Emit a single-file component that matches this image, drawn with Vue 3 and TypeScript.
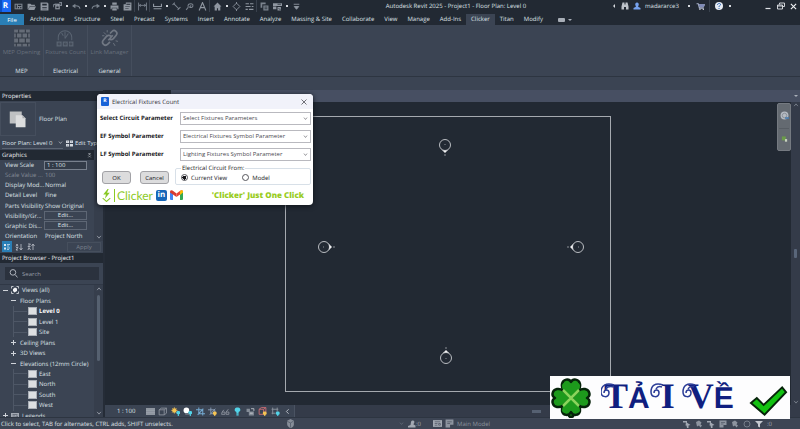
<script setup lang="ts">
import { h, ref } from 'vue'

type Part = { d: string; f?: string; s?: string; w?: number }
type Row = { label: string; value: string; kind: 'text' | 'input' | 'button'; muted?: boolean }
type Node = { label: string; depth: 0 | 1 | 2; mark: '+' | '-' | ''; current?: boolean }

const G = '#8f96a0'
const Y = '#f5c453'
const C = '#52d3e8'

const icons: Record<string, Part[]> = {
  recent: [{ d: 'M1 3h14v10H1z', f: '#7b838e' }, { d: 'M3 5h2v6H3zM7 5h6v2H7zM7 9h2v2H7zM11 9h2v2h-2z', f: '#222933' }],
  open: [{ d: 'M1 3h5l2 2h6v2H5l-3 6H1zM5 8h11l-3 6H2z', f: G }],
  save: [{ d: 'M1 1h12l2 2v12H1z', f: G }, { d: 'M4 3h8v3H4zM4 9h8v1H4zM4 12h8v1H4z', f: '#222933' }],
  sync: [{ d: 'M4 3h8v10H4z', f: G }, { d: 'M8 8a4 3 0 1 0-7 1M11 1h4v5h-4', s: '#7b838e', w: 2 }, { d: 'M6 8h4v3H6z', f: '#222933' }],
  undo: [{ d: 'M14 12c0-4-4-6-10-5', s: '#7b838e', w: 2 }, { d: 'M0 7l6-4v8z', f: '#7b838e' }],
  redo: [{ d: 'M2 12c0-4 4-6 10-5', s: '#7b838e', w: 2 }, { d: 'M16 7l-6-4v8z', f: '#7b838e' }],
  print: [{ d: 'M4 1h8v4H4zM1 6h14v7h-2v-3H3v3H1zM4 11h8v4H4z', f: G }],
  pdf: [{ d: 'M1 4h4V1h10v14H1z', f: G }, { d: 'M6 3h7v2H6zM4 8h8v1H4zM4 11h6v1H4z', f: '#222933' }],
  measure: [{ d: 'M1 1v14M15 1v14M2 6h12M5 4L2 6l3 2M11 4l3 2-3 2', s: '#7b838e', w: 1.6 }],
  dim: [{ d: 'M1 3v5h14V3M1 12h14', s: G, w: 2 }],
  line: [{ d: 'M3 3l9 9M1 5l4-4M10 14l5-5', s: '#7b838e', w: 1.8 }],
  tag: [{ d: 'M2 14l4-5M6 9c-3-5 5-8 8-4 1 4-3 6-6 4l3-3', s: '#7b838e', w: 1.8 }],
  letter: [{ d: 'M2 15L8 1l6 14M4 10h8', s: G, w: 2 }],
  home: [{ d: 'M8 1l7 7h-2v7H9v-4H7v4H3V8H1z', f: G }],
  section: [{ d: 'M8 2l6 6-6 6-6-6zM8 0v3M8 13v3', s: G, w: 1.6 }],
  lines: [{ d: 'M1 3h6M9 3h6M1 8h9M12 8h3M1 13h4M7 13h8', s: G, w: 2 }],
  windows: [{ d: 'M1 1h9v3H4v6H1zM6 6h9v9H6z', f: '#7b838e' }, { d: 'M8 9h5M8 12h5', s: '#222933', w: 1.4 }],
  tiles: [{ d: 'M0 2h16v5H0zM0 8h6v5H0zM8 9h6v6H8z', f: G }, { d: 'M8 4h6M10 11l3 3', s: '#222933', w: 1.4 }],
  more: [{ d: 'M3 4h10M4 8h8l-4 5z', s: G, w: 1.6, f: G }],
  bino: [{ d: 'M3 1h4v4h2V1h4l2 8v6h-5v-5H6v5H1V9z', f: '#bdc2ca' }],
  user: [{ d: 'M8 1a4 4 0 0 1 3 6c-1 2-1 3 0 3l4 2v3H1v-3l4-2c1 0 1-1 0-3a4 4 0 0 1 3-6z', f: '#76a2ee' }],
  cart: [{ d: 'M1 3h3l2 8h8M4 5h11l-2 4H6', s: '#aab3ca', w: 1.8 }, { d: 'M5 4h10l-1 5H6z', f: '#7f8bb8' }, { d: 'M6 12h2v2H6zM12 12h2v2h-2z', f: '#d6dae2' }],
  help: [{ d: 'M8 0a8 8 0 1 1 0 16A8 8 0 0 1 8 0z', f: '#e7ecf4' }, { d: 'M5 6c0-4 6-4 6-1 0 2-3 2-3 5M8 12v2', s: '#2d66b8', w: 2 }],
  min: [{ d: 'M3 13h10', s: '#e0e3e8', w: 2.4 }],
  restore: [{ d: 'M5 5V2h10v7h-4M1 6h10v8H1zM1 8h10', s: '#e0e3e8', w: 1.8 }],
  close: [{ d: 'M2 2l12 12M14 2L2 14', s: '#f0f2f5', w: 2.6 }],
  brick: [{ d: 'M2 1h28v30H2z', f: '#656c77' }, { d: 'M2 7h28M2 16h28M2 25h28M10 1v6M22 1v6M6 7v9M16 7v9M26 7v9M10 16v9M22 16v9M6 25v6M16 25v6M26 25v6', s: '#333b47', w: 2 }],
  count: [{ d: 'M4 20V15a12 12 0 0 1 24 0v5M16 5v12M10 7l3 5M22 8l-6 9', s: '#596371', w: 1.8 }, { d: 'M1 22h9v9H1zM12 22h9v9h-9zM23 22h8v9h-8z', f: '#596371' }, { d: 'M4 25h3v3H4zM15 25h3v3h-3zM25 25h3v3h-3z', s: '#333b47', w: 1 }],
  link: [{ d: 'M13 20l8-9M16 8l4-4c4-4 11 2 7 7l-5 6c-3 3-6 2-8 0M18 13c-3-3-7-2-9 1l-5 6c-4 5 3 12 8 7l4-4', s: '#717883', w: 3 }, { d: 'M5 6l4 4M11 2v4M2 12h4M26 21l4 1M22 25l3 5', s: '#717883', w: 1.6 }],
  search: [{ d: 'M7 1a5 5 0 1 1 0 10A5 5 0 0 1 7 1zM11 10l4 5', s: '#bbc0c8', w: 1.6 }],
  edittype: [{ d: 'M0 1h7v6H0zM9 1h7v6H9zM0 9h7v6H0zM9 9h7v6H9z', f: '#d8dce2' }, { d: 'M2 4h3M11 4h3M2 12h3', s: '#6f7c90', w: 1.4 }],
  views: [{ d: 'M1 5V1h4M11 1h4v4M15 11v4h-4M5 15H1v-4', s: '#dfe2e6', w: 1.6 }, { d: 'M8 3l4 2v5l-5 3-3-3V6z', f: '#f2f3f5' }],
  grouped: [{ d: 'M2 2h4v4H2zM2 9h4v4H2z', f: '#dce8f0' }, { d: 'M8 3h6M8 6h4M8 10h6M8 13h4', s: '#dce8f0', w: 1.4 }],
  az: [{ d: 'M2 7l2-5 2 5M2 9h4l-4 5h4M12 2v11M9 10l3 4 3-4', s: '#c5cad2', w: 1.5 }],
  za: [{ d: 'M2 2h5L2 7h5M2 14l2-5 3 5M12 14V3M9 6l3-4 3 4', s: '#c5cad2', w: 1.5 }],
  detail: [{ d: 'M0 2h16v12H0z', f: '#9da4ad' }, { d: 'M0 5h16M0 8h16M0 11h16', s: '#7b838e', w: 1 }],
  cube: [{ d: 'M2 5h9v9H2zM2 5l4-3h9l-4 3M15 2v9l-4 3', s: G, w: 1.5 }],
  sun: [{ d: 'M6 2a4 4 0 1 1 0 8 4 4 0 0 1 0-8z', f: Y }, { d: 'M6 0v12M0 6h12M2 2l8 8M10 2l-8 8', s: Y, w: 1 }, { d: 'M13 7a3 3 0 0 1 1 6v3h-2v-3a3 3 0 0 1 1-6z', f: C }],
  shadow: [{ d: 'M6 1a5 5 0 1 1 0 10A5 5 0 0 1 6 1z', f: '#fff' }, { d: 'M4 11h8v3H4z', f: '#6e7682' }, { d: 'M13 7a3 3 0 0 1 1 6v3h-2v-3a3 3 0 0 1 1-6z', f: C }],
  crop: [{ d: 'M5 1v11h11M0 5h12v10M3 14L13 3', s: '#74aad2', w: 1.8 }],
  cropshow: [{ d: 'M5 1v11h9M0 5h12v5M3 14L13 3', s: '#8da1b9', w: 1.6 }, { d: 'M12 8a3 3 0 0 1 1 6v2h-2v-2a3 3 0 0 1 1-6z', f: Y }],
  glasses: [{ d: 'M2 9h5v4H1zM9 9h5v4H9zM2 9l3-4M9 9l4-5', s: '#878e99', w: 1.7 }],
  bulb: [{ d: 'M8 1a4 4 0 0 1 2 8v3H6V9a4 4 0 0 1 2-8zM6 13h4v2H6z', f: C }],
  analytic: [{ d: 'M1 3h6v6H1zM5 8h9v7H5z', f: '#858d98' }, { d: 'M9 3h5v4M7 11h5', s: '#c6cad0', w: 1.5 }],
  reveal: [{ d: 'M2 4h8v9H2zM2 4l4-3h8l-4 3M14 1v8', s: '#c46b72', w: 1.7 }, { d: 'M12 8a3 3 0 0 1 1 6v2h-2v-2a3 3 0 0 1 1-6z', f: Y }],
  constraint: [{ d: 'M1 4h12M3 1v12M11 1v7M1 11h7', s: '#8d959f', w: 1.6 }, { d: 'M12 8a3 3 0 0 1 1 6v2h-2v-2a3 3 0 0 1 1-6z', f: C }],
  left: [{ d: 'M10 4L6 8l4 4', s: '#c0c5cd', w: 1.6 }],
  down: [{ d: 'M3 5l5 6 5-6', s: 'currentColor', w: 1.8 }],
  up: [{ d: 'M3 11l5-6 5 6', s: 'currentColor', w: 1.8 }],
  pin: [{ d: 'M4 2h8M4 8l4-4 4 4M4 14l4-4 4 4', s: '#d6d9de', w: 1.8 }],
  workset: [{ d: 'M8 0l6 3v7c-1 4-3 5-6 6-3-1-6-3-6-7V3z', f: '#878e99' }, { d: 'M2 4l6 3 5-3M8 7v8', s: '#565f6d', w: 1.5 }],
  person: [{ d: 'M9 1a3 3 0 0 1 3 5l-1 3 4 2v4H0v-3l5-2 1-6a3 3 0 0 1 3-3z', f: '#a2a8b2' }],
  list: [{ d: 'M0 2h16v12H0z', f: '#a2a8b2' }, { d: 'M3 5h10M3 8h5M3 11h5M10 8h3v3h-3z', s: '#4d5563', w: 1.3 }],
  option: [{ d: 'M1 1h14v9H9v5H1z', f: '#8d949f' }, { d: 'M4 5h8M4 8h5', s: '#4d5563', w: 1.3 }],
  pick: [{ d: 'M0 2h8v3H0zM6 4l9 6-4 1v5H8l-1-5H5z', f: '#a2a8b2' }],
  pick2: [{ d: 'M2 4l6-3 5 4-2 4 3 2-3 4-3-4-4 2z', f: '#8d949f' }],
  ring: [{ d: 'M8 2a6 6 0 1 1 0 12A6 6 0 0 1 8 2z', s: '#7e8692', w: 1.7 }],
  filter: [{ d: 'M0 2h16l-6 6v7l-4-2V8z', f: '#c5c9d0' }],
  x: [{ d: 'M3 3l10 10M13 3L3 13', s: '#3a3a40', w: 1.4 }],
  pages: [{ d: 'M1 2h16v16H1z', f: '#bfc1c3' }, { d: 'M9 7h9l4 4v12H9z', f: '#dcddde' }, { d: 'M18 7l4 4h-4z', f: '#a3a6aa' }],
  wheel: [{ d: 'M8 1a7 7 0 1 1 0 14A7 7 0 0 1 8 1z', f: '#b6bbc2' }, { d: 'M8 4a4 4 0 1 1 0 8 4 4 0 0 1 0-8z', s: '#7b828b', w: 1.3 }, { d: 'M9 11h7v3H9z', f: '#4c7dad' }],
  zoom: [{ d: 'M2 1h9v9H2z', f: '#6b9b4a' }, { d: 'M9 7h5v6H9z', f: '#c9d3c0' }],
}

const Glyph = (p: { name: string; size?: number; box?: string }) =>
  h('svg', { width: p.size ?? 9, height: p.size ?? 9, viewBox: p.box ?? '0 0 16 16', 'aria-hidden': 'true', class: 'glyph' },
    icons[p.name].map(a => h('path', { d: a.d, fill: a.f ?? 'none', stroke: a.s ?? 'none', 'stroke-width': a.w ?? 0 })))
Glyph.props = ['name', 'size', 'box']

const quick = ['recent', 'open', 'save', 'sync', '.', 'undo', '.', 'redo', '.', 'print', 'pdf', '|', 'measure', '|', 'dim', '.',
  'line', 'tag', 'letter', '|', 'home', '.', 'section', 'lines', '|', 'windows', 'tiles', '.', 'more']
const tabs = ['Architecture', 'Structure', 'Steel', 'Precast', 'Systems', 'Insert', 'Annotate', 'Analyze', 'Massing & Site',
  'Collaborate', 'View', 'Manage', 'Add-Ins', 'Clicker', 'Titan', 'Modify']
const panels = [
  { icon: 'brick', tool: 'MEP Opening', name: 'MEP' },
  { icon: 'count', tool: 'Fixtures Count', name: 'Electrical' },
  { icon: 'link', tool: 'Link Manager', name: 'General' },
]
const rows: Row[] = [
  { label: 'View Scale', value: '1 : 100', kind: 'input' },
  { label: 'Scale Value  ...', value: '100', kind: 'text', muted: true },
  { label: 'Display Mod...', value: 'Normal', kind: 'text' },
  { label: 'Detail Level', value: 'Fine', kind: 'text' },
  { label: 'Parts Visibility', value: 'Show Original', kind: 'text' },
  { label: 'Visibility/Gr...', value: 'Edit...', kind: 'button' },
  { label: 'Graphic Dis...', value: 'Edit...', kind: 'button' },
  { label: 'Orientation', value: 'Project North', kind: 'text' },
]
const tree: Node[] = [
  { label: 'Views (all)', depth: 0, mark: '-' },
  { label: 'Floor Plans', depth: 1, mark: '-' },
  { label: 'Level 0', depth: 2, mark: '', current: true },
  { label: 'Level 1', depth: 2, mark: '' },
  { label: 'Site', depth: 2, mark: '' },
  { label: 'Ceiling Plans', depth: 1, mark: '+' },
  { label: '3D Views', depth: 1, mark: '+' },
  { label: 'Elevations (12mm Circle)', depth: 1, mark: '-' },
  { label: 'East', depth: 2, mark: '' },
  { label: 'North', depth: 2, mark: '' },
  { label: 'South', depth: 2, mark: '' },
  { label: 'West', depth: 2, mark: '' },
  { label: 'Legends', depth: 0, mark: '+' },
]
const viewTools = ['detail', 'cube', 'sun', 'shadow', 'crop', 'cropshow', 'glasses', 'bulb', 'analytic', 'reveal', 'constraint', 'left']
const pickTools = ['pick', 'pick2', 'pick', 'option', 'pick2', 'ring', 'filter']
const fields = [
  { id: 'circuit', label: 'Select Circuit Parameter', value: 'Select Fixtures Parameters' },
  { id: 'ef', label: 'EF Symbol Parameter', value: 'Electrical Fixtures Symbol Parameter' },
  { id: 'lf', label: 'LF Symbol Parameter', value: 'Lighting Fixtures Symbol Parameter' },
]
const markers = [
  { x: 445, y: 145, turn: 90 },
  { x: 324, y: 247, turn: 0 },
  { x: 578, y: 247, turn: 180 },
  { x: 446, y: 358, turn: 270 },
]
const source = ref('view')
const query = ref('')
const scale = ref('1 : 100')
</script>

<template>
  <div class="app">
    <header class="titlebar">
      <span class="logo">R</span>
      <div class="quick">
        <template v-for="(q, i) in quick" :key="i">
          <i v-if="q === '.'" class="dot"></i>
          <i v-else-if="q === '|'" class="sep"></i>
          <button v-else type="button" class="tool" :aria-label="q"><Glyph :name="q" /></button>
        </template>
      </div>
      <h1 class="title">Autodesk Revit 2025 - Project1 - Floor Plan: Level 0</h1>
      <div class="account">
        <i class="arrow"></i>
        <Glyph name="bino" :size="8" />
        <Glyph name="user" :size="8" />
        <span class="name">madararce3</span>
        <i class="dot"></i>
        <Glyph name="cart" />
        <i class="sep"></i>
        <Glyph name="help" :size="8" />
        <i class="dot"></i>
      </div>
      <div class="winbtns">
        <button type="button" class="tool" aria-label="Minimize"><Glyph name="min" :size="8" /></button>
        <button type="button" class="tool" aria-label="Restore"><Glyph name="restore" :size="8" /></button>
        <button type="button" class="tool" aria-label="Close"><Glyph name="close" :size="7" /></button>
      </div>
    </header>

    <nav class="tabs">
      <button type="button" class="file">File</button>
      <a v-for="t in tabs" :key="t" href="#" :class="['tab', { on: t === 'Clicker' }]">{{ t }}</a>
      <button type="button" class="tabmode" aria-label="Ribbon display"><i class="pill"></i><i class="caret"></i></button>
    </nav>

    <section class="ribbon">
      <div v-for="p in panels" :key="p.name" class="rpanel">
        <button type="button" class="rtool" disabled>
          <Glyph :name="p.icon" :size="18" box="0 0 32 32" />
          <span>{{ p.tool }}</span>
        </button>
        <span class="rname">{{ p.name }}</span>
      </div>
    </section>
    <div class="options"></div>

    <main class="work">
      <aside class="side">
        <section class="props">
          <h2 class="bar">Properties</h2>
          <div class="type">
            <span class="thumb"><Glyph name="pages" :size="18" box="0 0 24 24" /></span>
            <span>Floor Plan</span>
          </div>
          <div class="picker">
            <button type="button" class="pickview">Floor Plan: Level 0 <Glyph name="down" :size="5" /></button>
            <button type="button" class="edittype"><Glyph name="edittype" :size="7" /> Edit Type</button>
          </div>
          <h3 class="bar group">Graphics <Glyph name="pin" :size="5" /></h3>
          <div class="gridwrap">
            <dl class="grid">
              <div v-for="r in rows" :key="r.label" :class="['row', { muted: r.muted }]">
                <dt>{{ r.label }}</dt>
                <dd>
                  <input v-if="r.kind === 'input'" v-model="scale" :aria-label="r.label" />
                  <button v-else-if="r.kind === 'button'" type="button">{{ r.value }}</button>
                  <template v-else>{{ r.value }}</template>
                </dd>
              </div>
            </dl>
            <div class="scroll"><i class="thumbbar short"></i><Glyph name="down" :size="6" /></div>
          </div>
          <div class="sorts">
            <button type="button" class="on" aria-label="Grouped"><Glyph name="grouped" :size="8" /></button>
            <button type="button" aria-label="Ascending"><Glyph name="az" :size="8" /></button>
            <button type="button" aria-label="Descending"><Glyph name="za" :size="8" /></button>
            <button type="button" class="apply" disabled>Apply</button>
          </div>
        </section>
        <section class="browser">
          <h2 class="bar">Project Browser - Project1</h2>
          <label class="find"><Glyph name="search" :size="9" /><input v-model="query" type="text" placeholder="Search" aria-label="Search" /></label>
          <div class="treewrap">
            <ul class="tree">
              <li v-for="n in tree" :key="n.label" :class="['node', 'd' + n.depth, { current: n.current }]">
                <i v-if="n.mark" :class="['mark', { plus: n.mark === '+' }]"></i>
                <i v-if="n.depth === 2" class="sheet"></i>
                <Glyph v-if="n.label === 'Views (all)'" name="views" :size="8" />
                <Glyph v-if="n.label === 'Legends'" name="list" :size="8" />
                <span>{{ n.label }}</span>
              </li>
            </ul>
            <div class="scroll"><Glyph name="up" :size="6" /><i class="thumbbar"></i><Glyph name="down" :size="6" /></div>
          </div>
        </section>
      </aside>

      <section class="view">
        <div class="doctabs"><span class="doctab"></span><i class="caret"></i></div>
        <div class="canvas">
          <svg class="drawing" viewBox="105 102 686 303" preserveAspectRatio="xMidYMid meet" role="img" aria-label="Floor plan drawing">
            <rect x="285.500" y="116.500" width="325" height="275" fill="none" stroke="#a5a9af" />
            <g v-for="(m, i) in markers" :key="i" :transform="`translate(${m.x} ${m.y}) rotate(${m.turn})`">
              <circle r="5.500" fill="none" stroke="#b9bcc1" />
              <path d="M4-4L8 0 4 4C6 2 6-2 4-4z" fill="#f1f2f3" />
              <path d="M-1 0h1M9 0h2" stroke="#8b9097" />
            </g>
          </svg>
          <div class="navbar">
            <button type="button" aria-label="Steering wheel"><Glyph name="wheel" /></button>
            <i></i>
            <button type="button" aria-label="Zoom"><Glyph name="zoom" :size="7" /></button>
          </div>
          <div class="vscroll"><Glyph name="up" :size="6" /><i></i><Glyph name="down" :size="6" /></div>
        </div>
        <div class="viewbar">
          <span class="scale">1 : 100</span>
          <button v-for="v in viewTools" :key="v" type="button" :aria-label="v"><Glyph :name="v" :size="9" /></button>
          <div class="hscroll"><i></i></div>
        </div>
      </section>
    </main>

    <footer class="status">
      <span class="hint">Click to select, TAB for alternates, CTRL adds, SHIFT unselects.</span>
      <div class="workset"><Glyph name="workset" /><Glyph name="down" :size="5" /></div>
      <span class="requests"><Glyph name="person" :size="8" />:0</span>
      <span class="model"><Glyph name="list" /><Glyph name="option" /> Main Model</span>
      <div class="picks"><Glyph v-for="(p, i) in pickTools" :key="i" :name="p" :size="8" /><span>:0</span></div>
    </footer>

    <form class="dialog" role="dialog" aria-labelledby="dlg-title" @submit.prevent>
      <header class="dhead">
        <span class="dlogo">R</span>
        <h2 id="dlg-title">Electrical Fixtures Count</h2>
        <button type="button" aria-label="Close dialog"><Glyph name="x" :size="8" /></button>
      </header>
      <div class="dbody">
        <div v-for="f in fields" :key="f.id" class="field">
          <label :for="f.id">{{ f.label }}</label>
          <span class="combo">
            <select :id="f.id"><option>{{ f.value }}</option></select>
            <Glyph name="down" :size="5" />
          </span>
        </div>
        <div class="actions">
          <button type="submit">OK</button>
          <button type="button">Cancel</button>
          <fieldset>
            <legend>Electrical Circuit From:</legend>
            <label><input v-model="source" type="radio" name="source" value="view" />Current View</label>
            <label><input v-model="source" type="radio" name="source" value="model" />Model</label>
          </fieldset>
        </div>
        <div class="brand">
          <svg class="glyph" width="9" height="13" viewBox="0 0 16 24" aria-hidden="true">
            <path d="M10 0L2 10h5l-2 8 9-11H9l3-7z" fill="#8bc926" /><path d="M1 17l7 6 7-6" fill="none" stroke="#8bc926" stroke-width="2" />
          </svg>
          <span class="word">Clicker</span>
          <a href="#" class="linkedin" aria-label="LinkedIn">in</a>
          <a href="#" aria-label="Mail">
            <svg class="glyph" width="13" height="10" viewBox="0 0 26 20" aria-hidden="true">
              <path d="M0 3v15q0 2 2 2h4V7z" fill="#4284f3" /><path d="M26 3v15q0 2-2 2h-4V7z" fill="#34a853" />
              <path d="M0 3Q1-1 5 1l8 6v7L0 5z" fill="#d63a32" /><path d="M26 3q-1-4-5-2l-8 6v7l7-5z" fill="#e94235" /><path d="M20 3l3-3q3 0 3 3v2l-6 5z" fill="#fbbc04" />
            </svg>
          </a>
          <strong>'Clicker' Just One Click</strong>
        </div>
      </div>
    </form>

    <a class="banner" href="#">
      <svg class="clover" viewBox="0 0 40 40" aria-hidden="true">
        <g stroke="#06230a" stroke-width="2.500" fill="#1d9a1c" stroke-linejoin="round">
          <path d="M18 24c-2 6-2 13 1 15 3 0 4-1 3-3-2-3-1-8 0-12z" />
          <path d="M20 20C15 15 10 12 11 6c1-5 7-6 9-2 2-4 8-3 9 2 1 6-4 9-9 14z" />
          <path d="M20 20C15 25 10 28 11 33c1 5 7 5 9 1 2 4 8 4 9-1 1-5-4-8-9-13z" />
          <path d="M20 20c5-5 8-10 14-9 5 1 6 7 2 9 4 2 3 8-2 9-6 1-9-4-14-9z" />
          <path d="M20 20c-5 5-8 10-14 9-5-1-6-7-2-9-4-2-3-8 2-9 6-1 9 4 14 9z" />
        </g>
        <path d="M11 7q-1 5 9 13Q30 12 29 7q-2-5-8 0l-1 3-1-3q-6-5-8 0zM11 33q-1-5 9-13 10 8 9 13-2 4-8 0l-1-3-1 3q-6 4-8 0z" fill="#1d9a1c" />
        <path d="M20 20l-8-8M20 20l8-8M20 20l8 8M20 20l-8 8" stroke="#8bd45c" stroke-width="2.500" />
      </svg>
      <span class="download"><b class="swash">T</b><b class="plain">Ả</b><b class="swash bar-i">I</b><b class="swash vee">V</b><b class="plain">Ề</b>
        <svg class="curls" viewBox="0 0 132 32" aria-hidden="true">
          <g fill="none" stroke="#2b3d97" stroke-width="1.500">
            <path d="M13 4C5 1 0 5 0 11c0 6 8 6 8 1 0-4-5-4-5 0M13 6C9 5 6 6 5 8" />
            <path d="M62 4c-8-3-12 1-12 7 0 6 8 6 8 1 0-4-5-4-5 0M61 6c-3-1-5 0-6 2" />
            <path d="M94 4c-8-3-12 1-12 7 0 6 8 6 8 1 0-4-5-4-5 0M93 6c-3-1-5 0-6 2" />
          </g>
        </svg>
      </span>
      <svg class="tick" viewBox="0 0 40 32" aria-hidden="true">
        <path d="M2 18l6-5 7 7L34 2l4 5-22 23z" fill="#12c211" stroke="#06230a" stroke-width="2" />
      </svg>
    </a>
  </div>
</template>

<style>
body { margin: 0; background: #222933; }
</style>

<style scoped>
.app { position: relative; display: flex; flex-direction: column; height: 100vh; overflow: hidden; background: #3b4453; color: #dfe2e7; font: 6px/10px "Open Sans", "Noto Sans", sans-serif; text-rendering: geometricPrecision; }
.app * { box-sizing: border-box; }
.glyph { display: block; flex: none; }
button, input, select { font: inherit; color: inherit; padding: 0; margin: 0; border: 0; background: none; min-width: 0; }
a { color: inherit; text-decoration: none; }
h1, h2, h3, dl, dd, ul { margin: 0; padding: 0; font-size: inherit; font-weight: 400; list-style: none; }
.tool { width: 13px; height: 12px; display: grid; place-items: center; }
.dot { flex: none; width: 6px; height: 2px; background: radial-gradient(circle, #d6d9de 1px, transparent 1px); }
.sep { width: 2px; height: 12px; border-left: 1px solid #39414d; }
.caret { border: 2px solid transparent; border-top-color: #aab0b9; border-bottom: 0; }

.titlebar { flex: none; display: flex; align-items: center; height: 14px; padding-bottom: 2px; background: #222933; }
.logo { width: 11px; height: 12px; margin-right: 1px; background: linear-gradient(90deg, #0a4fc4 2px, #1969f5 2px); color: #fff; font-weight: 700; font-size: 8px; line-height: 11px; text-align: center; }
.quick { display: flex; align-items: center; }
.title { flex: 1; text-align: center; white-space: nowrap; }
.account { display: flex; align-items: center; gap: 4px; width: 132px; padding-left: 4px; }
.account .name { width: 37px; }
.account .arrow { margin-right: 2px; }
.account .sep { flex: none; }
.arrow { border: 2px solid transparent; border-right-color: #d6d9de; border-left: 0; }
.winbtns { display: flex; margin-left: 20px; }

.tabs { flex: none; display: flex; height: 11px; background: #222933; white-space: nowrap; align-items: stretch; }
.file { width: 24px; background: #2a7fb6; color: #fff; }
.tab { padding: 0 5px; line-height: 11px; }
.tab.on { background: #3b4453; }
.tabs .file { margin-right: 1px; }
.tabmode { display: flex; align-items: center; gap: 3px; margin-left: 10px; }
.pill { width: 7px; height: 4px; border-radius: 1px; background: #a8aeb7; }

.ribbon { flex: none; display: flex; height: 52px; border-bottom: 1px solid #2d3541; }
.rpanel { display: flex; flex-direction: column; justify-content: space-between; align-items: center; width: 44px; padding: 4px 0 0; border-right: 1px solid #454e5d; }
.rtool { display: flex; flex-direction: column; align-items: center; color: #68707c; white-space: nowrap; }
.options { flex: none; height: 13px; }

.work { flex: 1; min-height: 0; display: flex; }
.side { flex: none; width: 105px; display: flex; flex-direction: column; border-right: 2px solid #252c37; overflow: hidden; }
.bar { flex: none; height: 10px; padding-left: 2px; background: #222933; color: #f0f1f3; }
.props { flex: none; padding-top: 1px; }
.type { display: flex; align-items: center; gap: 3px; height: 35px; }
.thumb { display: grid; place-items: center; width: 36px; height: 34px; border: 1px solid #454e5d; }
.picker { display: flex; align-items: center; gap: 3px; height: 14px; white-space: nowrap; }
.pickview { display: flex; align-items: center; justify-content: space-between; width: 61px; height: 12px; margin-left: 2px; border-bottom: 1px solid #5b6472; }
.edittype { display: flex; align-items: center; gap: 2px; }
.group { display: flex; align-items: center; justify-content: space-between; width: 94px; padding-right: 2px; }
.gridwrap { display: flex; height: 81px; }
.grid { flex: 1; display: flex; flex-direction: column; }
.row { flex: 1; display: flex; align-items: center; }
.row dt { width: 40px; padding-left: 5px; white-space: nowrap; }
.row dd { flex: 1; padding-left: 5px; white-space: nowrap; }
.row.muted { color: #858c98; }
.row input, .row dd button { display: block; width: 43px; height: 9px; margin-left: -1px; border: 1px solid #78808d; line-height: 7px; }
.row input { padding-left: 2px; background: #333b48; }
.row dd button { text-align: center; border-color: #5d6674; }
.scroll { flex: none; width: 9px; display: flex; flex-direction: column; align-items: center; justify-content: space-between; background: #363e4c; color: #b5bac3; padding: 1px 0; }
.thumbbar { width: 3px; height: 66px; margin-bottom: auto; margin-top: 3px; border-radius: 2px; background: #566170; }
.thumbbar.short { height: 12px; visibility: hidden; }
.sorts { display: flex; align-items: center; gap: 2px; height: 12px; padding: 0 2px 1px; }
.sorts button { display: grid; place-items: center; width: 10px; height: 11px; }
.sorts .on { background: #2a7fb6; }
.sorts .apply { width: 34px; height: 10px; margin-left: auto; border: 1px solid #464f5d; color: #7b838f; line-height: 8px; }
.browser { flex: 1; min-height: 0; display: flex; flex-direction: column; }
.find { flex: none; display: flex; align-items: center; gap: 4px; height: 13px; margin: 4px 4px 4px 5px; padding-left: 4px; background: #2b323e; }
.find input { flex: 1; height: 12px; }
.find input::placeholder { color: #979da7; opacity: 1; }
.treewrap { flex: 1; min-height: 0; display: flex; overflow: hidden; border-top: 1px solid #303846; }
.tree { flex: 1; display: flex; flex-direction: column; height: calc(100% + 4px); }
.node { flex: 1; display: flex; align-items: center; gap: 3px; padding-left: 3px; white-space: nowrap; }
.node.d1 { padding-left: 11px; gap: 4px; }
.node.d2 { padding-left: 28px; gap: 2px; background: linear-gradient(#4e5766, #4e5766) 13px 50% / 14px 1px no-repeat, linear-gradient(90deg, #4e5766 1px, transparent 1px) 13px 0 / 1px 100% no-repeat; }
.node.current span { font-weight: 700; color: #fff; }
.mark { width: 5px; height: 5px; background: linear-gradient(#cfd3d9, #cfd3d9) 0 50% / 5px 1px no-repeat; }
.mark.plus { background: linear-gradient(#cfd3d9, #cfd3d9) 0 50% / 5px 1px no-repeat, linear-gradient(#cfd3d9, #cfd3d9) 50% 0 / 1px 5px no-repeat; }
.sheet { width: 9px; height: 8px; background: #dcdfe2; border: 1px solid #aab0b8; }

.view { flex: 1; min-width: 0; display: flex; flex-direction: column; }
.doctabs { flex: none; display: flex; align-items: center; justify-content: space-between; height: 12px; padding-right: 2px; background: #474f62; }
.doctab { width: 66px; height: 12px; background: #222933; }
.canvas { flex: 1; min-height: 0; display: flex; background: #222933; }
.drawing { flex: 1; min-width: 0; height: 100%; margin-right: -14px; }
.navbar { display: flex; flex-direction: column; align-items: center; justify-content: space-evenly; width: 14px; height: 48px; margin-top: 1px; border-radius: 2px; background: #646a71; border: 1px solid #757a81; }
.navbar i { width: 10px; height: 1px; background: #575d64; }
.vscroll { width: 9px; display: flex; flex-direction: column; justify-content: space-between; align-items: center; background: #343b49; color: #9299a4; }
.vscroll i { width: 3px; height: 9px; border-radius: 1px; background: #59667a; }
.viewbar { flex: none; display: flex; align-items: center; height: 12px; background: #3b4453; }
.viewbar .scale { width: 39px; padding-left: 12px; }
.viewbar button { display: grid; place-items: center; flex: 0 0 12px; height: 11px; }
.viewbar button:nth-of-type(even) { flex-basis: 13px; }
.hscroll { flex: 1; height: 12px; display: grid; place-items: center; padding-right: 22px; background: #343b49; border-left: 1px solid #4a5362; }
.hscroll i { width: 9px; height: 3px; background: #566172; }

.status { flex: none; display: flex; align-items: center; height: 12px; border-top: 1px solid #2d3541; background: #3d4554; padding-left: 1px; white-space: nowrap; }
.hint { width: 285px; }
.workset { display: flex; align-items: center; justify-content: space-between; width: 118px; color: #747c88; }
.requests { display: flex; align-items: center; width: 29px; padding-left: 4px; color: #a2a8b2; }
.model { display: flex; align-items: center; gap: 3px; color: #8b929d; }
.picks { display: flex; align-items: center; gap: 4px; margin-left: auto; padding-right: 28px; color: #a2a8b2; }

.dialog { position: absolute; left: 97px; top: 94px; width: 216px; border-radius: 4px; overflow: hidden; background: #fff; color: #17171b; box-shadow: 0 1px 5px #10141b; }
.dhead { display: flex; align-items: center; gap: 3px; height: 15px; padding: 0 5px 0 4px; background: #f1f2fa; }
.dhead h2 { flex: 1; color: #35353c; }
.dlogo { width: 8px; height: 9px; border-radius: 1px; background: #1862d8; color: #fff; font-size: 5px; font-weight: 700; line-height: 9px; text-align: center; }
.dbody { padding: 0 2px 1px 3px; }
.field { display: flex; align-items: center; height: 18px; }
.field label { width: 80px; font-weight: 700; }
.combo { flex: 1; display: flex; align-items: center; height: 13px; border: 1px solid #b9b9bf; color: #4a4a50; padding-right: 2px; }
.combo select { flex: 1; appearance: none; height: 11px; padding-left: 2px; outline: 0; }
.actions { display: flex; align-items: flex-end; height: 22px; }
.actions button { width: 29px; height: 13px; margin: 0 0 1px 2px; border: 1px solid #a2a2a6; border-radius: 3px; background: #dcdcdd; }
.actions button + button { margin-left: 9px; }
fieldset { display: flex; flex: 1; min-width: 0; height: 20px; margin: 0 0 0 6px; padding: 0 0 0 5px; border: 1px solid #d8e0e8; border-radius: 2px; gap: 15px; }
legend { padding: 0 1px; line-height: 7px; }
fieldset label { display: flex; align-items: center; gap: 3px; height: 11px; }
fieldset input { appearance: none; width: 7px; height: 7px; border: 1px solid #55555b; border-radius: 50%; }
fieldset input:checked { background: radial-gradient(circle, #17171b 2px, #fff 2px); }
.brand { display: flex; align-items: center; gap: 3px; height: 19px; padding: 1px 7px 0 2px; }
.brand strong { padding-top: 2px; }
.word { padding-left: 2px; border-left: 1px solid #8bc926; color: #8bc926; font: 12px/13px Lato, sans-serif; }
.linkedin { width: 11px; height: 11px; border-radius: 2px; background: #1666b8; color: #fff; font-weight: 700; font-size: 8px; line-height: 10px; text-align: center; }
.brand strong { margin-left: auto; color: #99cc1e; font: 800 8px/12px "Open Sans", sans-serif; white-space: nowrap; }

.banner { position: absolute; right: 10px; bottom: 10px; width: 240px; height: 43px; display: flex; align-items: center; justify-content: space-between; padding: 0 2px 0 1px; background: #fdfdfe; }
.clover { width: 40px; height: 40px; margin-right: 10px; }
.tick { width: 39px; height: 32px; margin-top: 6px; }
.download { position: relative; flex: 1; display: flex; align-items: baseline; color: #101f80; font-size: 36px; line-height: 50px; }
.swash { padding-left: 3px; font-family: "Liberation Serif", serif; font-weight: 700; }
.plain { font: 700 30px/50px "Liberation Sans", sans-serif; }
.bar-i { margin-left: 8px; }
.vee { margin-left: 10px; }
.curls { position: absolute; left: 0; top: 10px; width: 132px; height: 32px; }
</style>
